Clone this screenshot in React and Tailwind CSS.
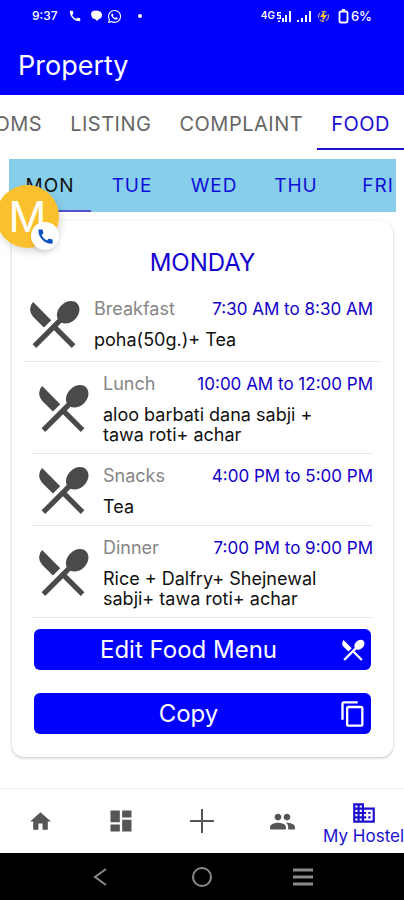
import {
  MdBusiness,
  MdCall,
  MdContentCopy,
  MdDashboard,
  MdHome,
  MdPeople,
  MdRestaurantMenu,
} from 'react-icons/md';
import { FaWhatsapp } from 'react-icons/fa';

const sections = ['ROOMS', 'LISTING', 'COMPLAINT', 'FOOD'];
const days = ['MON', 'TUE', 'WED', 'THU', 'FRI'];

const meals = [
  { name: 'Breakfast', time: '7:30 AM to 8:30 AM', menu: 'poha(50g.)+ Tea' },
  { name: 'Lunch', time: '10:00 AM to 12:00 PM', menu: 'aloo barbati dana sabji + tawa roti+ achar' },
  { name: 'Snacks', time: '4:00 PM to 5:00 PM', menu: 'Tea' },
  { name: 'Dinner', time: '7:00 PM to 9:00 PM', menu: 'Rice + Dalfry+ Shejnewal sabji+ tawa roti+ achar' },
];

const SignalBars = ({ roaming }) => (
  <svg width="14" height="13" viewBox="0 0 14 13" fill="currentColor" aria-hidden="true">
    {roaming ? (
      <path d="M0 2h4v1.3H1.4v1.4H4V9H0V7.7h2.6V6H0z" />
    ) : (
      <path d="M0 10h2v2H0z" />
    )}
    <path d={roaming ? 'M1 10.5h2V12H1zM5 8h2v4H5z' : 'M4 8h2v4H4z'} />
    <path d="M8 5h2v7H8zM12 1h2v11h-2z" />
  </svg>
);

const StatusBar = () => (
  <div className="flex items-center justify-between px-8 h-8 text-white text-xs font-medium">
    <div className="flex items-center">
      <span>9:37</span>
      <MdCall size={14} className="ml-2.5" />
      <svg className="ml-2" width="13" height="12" viewBox="0 0 13 12" fill="currentColor" aria-hidden="true">
        <path d="M3 1Q6 0 9 1Q12 2 12 5Q12 8 9 9L7 11L5 9Q2 9 1.500 6Q0 3 3 1Z" />
      </svg>
      <FaWhatsapp size={15} className="ml-1" />
      <span className="ml-4 size-1 rounded-full bg-white" />
    </div>
    <div className="flex items-center">
      <span className="text-[10px] font-semibold">4G</span>
      <span className="w-0.5" />
      <SignalBars roaming />
      <span className="w-1.5" />
      <SignalBars />
      <svg className="ml-1.5" width="13" height="13" viewBox="0 0 13 13" aria-hidden="true">
        <circle cx="6.500" cy="6.500" r="5" fill="none" stroke="#b9a68c" strokeWidth="1.200" strokeDasharray="5 2" />
        <path d="M8 0L3 7h3l-1 5 5-7H7z" fill="#ffc13b" />
      </svg>
      <svg className="ml-2" width="11" height="15" viewBox="0 0 11 15" fill="none" stroke="currentColor" aria-hidden="true">
        <rect x="1.500" y="2.500" width="8" height="11" rx="1.500" strokeWidth="1.800" />
        <path d="M4 1h3" strokeWidth="2" />
      </svg>
      <span className="ml-0.5 text-[13px] leading-4">6%</span>
    </div>
  </div>
);

const MealRow = ({ meal, first }) => (
  <li
    className={`flex items-center border-b border-gray-200 ${first ? 'ml-[11px] mr-3' : 'mx-5'}`}
  >
    <MdRestaurantMenu size={62} className="shrink-0 text-[#4a4a4a]" />
    <div className={`flex-1 min-w-0 pt-3 pl-[9px] ${first ? 'pb-[11px] pr-2' : 'pb-2'}`}>
      <div className="flex justify-between whitespace-nowrap text-[17px] leading-5">
        <h3 className="text-lg leading-5 text-[#858585]">{meal.name}</h3>
        <span className="text-[#1400c8]">{meal.time}</span>
      </div>
      <p className="mt-[11px] pr-12 text-lg leading-5 text-[#111]">{meal.menu}</p>
    </div>
  </li>
);

const ActionButton = ({ label, Icon }) => (
  <button className="w-full h-[41px] px-1 flex items-center rounded-md bg-[#0000ff] text-white text-2xl cursor-pointer">
    <span className="flex-1 text-center">{label}</span>
    <Icon size={28} />
  </button>
);

const NavButton = ({ label, children }) => (
  <button aria-label={label} className="flex-1 flex items-center justify-center text-[#555] cursor-pointer">
    {children}
  </button>
);

const App = () => {
  return (
    <div className="relative min-h-screen flex flex-col overflow-hidden bg-white [font-family:Inter,sans-serif]">
      <header className="h-[95px] bg-[#0000ff]">
        <StatusBar />
        <h1 className="px-[18px] pt-4 text-white text-[27px] leading-9">Property</h1>
      </header>

      <nav className="flex justify-end overflow-hidden h-[55px]">
        {sections.map((s) => (
          <button
            key={s}
            className={`shrink-0 px-[14px] pt-1 text-xl tracking-wide border-b-2 cursor-pointer ${s === 'FOOD' ? 'text-[#1c10d0] border-[#1c10d0]' : 'text-[#666] border-transparent'
              }`}
          >
            {s}
          </button>
        ))}
      </nav>

      <div className="mt-[9px] ml-[9px] mr-2 h-[53px] flex overflow-hidden bg-[#87ceeb]">
        {days.map((d) => (
          <button
            key={d}
            className={`w-[82px] shrink-0 pt-1 text-[19px] tracking-wider border-b-2 cursor-pointer ${d === 'MON' ? 'text-[#111] border-[#5a4fcf]' : 'text-[#1010d8] border-transparent'
              }`}
          >
            {d}
          </button>
        ))}
      </div>

      <main className="mt-[9px] ml-3 mr-[11px] pb-[23px] rounded-xl bg-white shadow-[0_1px_3px_rgba(0,0,0,0.25)]">
        <h2 className="pt-[26px] pb-2 text-center text-2xl text-[#1400d0]">MONDAY</h2>
        <ul>
          {meals.map((meal, i) => (
            <MealRow key={meal.name} meal={meal} first={i === 0} />
          ))}
        </ul>
        <div className="mt-[11px] mx-[22px] flex flex-col gap-[23px]">
          <ActionButton label="Edit Food Menu" Icon={MdRestaurantMenu} />
          <ActionButton label="Copy" Icon={MdContentCopy} />
        </div>
      </main>

      <footer className="mt-auto">
        <nav className="flex h-[65px] border-t border-gray-100">
          <NavButton label="Home"><MdHome size={25} /></NavButton>
          <NavButton label="Dashboard"><MdDashboard size={28} /></NavButton>
          <NavButton label="Add">
            <svg width="26" height="26" viewBox="0 0 26 26" stroke="currentColor" strokeWidth="2" aria-hidden="true">
              <path d="M13 1v24M1 13h24" />
            </svg>
          </NavButton>
          <NavButton label="People"><MdPeople size={27} /></NavButton>
          <button className="flex-1 min-w-0 pt-1 flex flex-col items-center justify-center text-[#1c10d0] cursor-pointer">
            <MdBusiness size={26} />
            <span className="whitespace-nowrap text-[17px] leading-5">My Hostel</span>
          </button>
        </nav>
        <div className="flex items-center justify-center gap-[79px] h-[47px] bg-black text-[#8a8a8a]">
          <button aria-label="Back" className="cursor-pointer">
            <svg width="22" height="22" viewBox="0 0 22 22" fill="none" stroke="currentColor" strokeWidth="2">
              <path d="M16 3L5 11l11 8" />
            </svg>
          </button>
          <button aria-label="Home screen" className="cursor-pointer">
            <svg width="22" height="22" viewBox="0 0 22 22" fill="none" stroke="currentColor" strokeWidth="2">
              <circle cx="11" cy="11" r="9" />
            </svg>
          </button>
          <button aria-label="Recent apps" className="cursor-pointer">
            <svg width="22" height="22" viewBox="0 0 22 22" fill="none" stroke="currentColor" strokeWidth="3">
              <path d="M1 4h20M1 11h20M1 18h20" />
            </svg>
          </button>
        </div>
      </footer>

      {/* Floating caller bubble */}
      <div className="absolute top-[185px] -left-1 size-[63px] rounded-full bg-[#fbc02d] flex items-center justify-center text-white text-[42px] leading-none shadow-[2px_4px_8px_rgba(0,0,0,0.15)]">
        M
        <span className="absolute right-0 -bottom-0.5 size-7 rounded-full bg-white flex items-center justify-center text-[#0b50c0] shadow-md">
          <MdCall size={19} />
        </span>
      </div>
    </div>
  );
};

export default App;
